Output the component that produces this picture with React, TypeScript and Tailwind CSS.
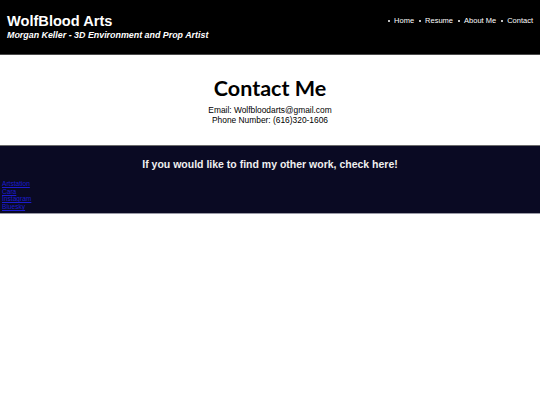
const navLinks = ["Home", "Resume", "About Me", "Contact"]
const socials = ["Artstation", "Cara", "Instagram", "Bluesky"]

export default function App() {
  return (
    <div className="min-h-[405px] bg-white font-['Liberation_Sans',Arial,sans-serif]">
      {/* Header */}
      <header className="flex h-[55px] items-start justify-between border-b border-[#4a4a4a] bg-black px-[7px] text-white">
        <div className="pt-[13px]">
          <h1 className="text-[14.6px] font-bold leading-[17px]">WolfBlood Arts</h1>
          <p className="text-[8.9px] font-bold italic leading-[10px]">
            Morgan Keller - 3D Environment and Prop Artist
          </p>
        </div>
        <nav className="pt-[16px]">
          <ul className="flex items-center gap-[5px] text-[7.5px] leading-[10px]">
            {navLinks.map((link) => (
              <li key={link} className="flex items-center gap-[4px]">
                <span className="h-[2px] w-[2px] rounded-full bg-white" />
                <a href="#">{link}</a>
              </li>
            ))}
          </ul>
        </nav>
      </header>

      {/* Contact */}
      <section className="flex h-[90px] flex-col items-center pt-[20px] text-black">
        <h2 className="font-['Lato',sans-serif] text-[21.5px] font-bold leading-[26px]">Contact Me</h2>
        <p className="mt-[4px] text-[8.4px] leading-[10px]">Email: Wolfbloodarts@gmail.com</p>
        <p className="text-[8.4px] leading-[10px]">Phone Number: (616)320-1606</p>
      </section>

      {/* Other work */}
      <footer className="h-[69px] border-y border-t-[#6b6b6b] border-b-[#9a9aa6] bg-[#0a0a23]">
        <h3 className="pt-[12px] text-center text-[10.5px] font-bold leading-[13px] text-[#f0f0f0]">
          If you would like to find my other work, check here!
        </h3>
        <ul className="mt-[9px] pl-[2px] text-[6.6px] leading-[7.7px]">
          {socials.map((s) => (
            <li key={s}>
              <a href="#" className="text-[#1c1ccf] underline">
                {s}
              </a>
            </li>
          ))}
        </ul>
      </footer>
    </div>
  )
}
